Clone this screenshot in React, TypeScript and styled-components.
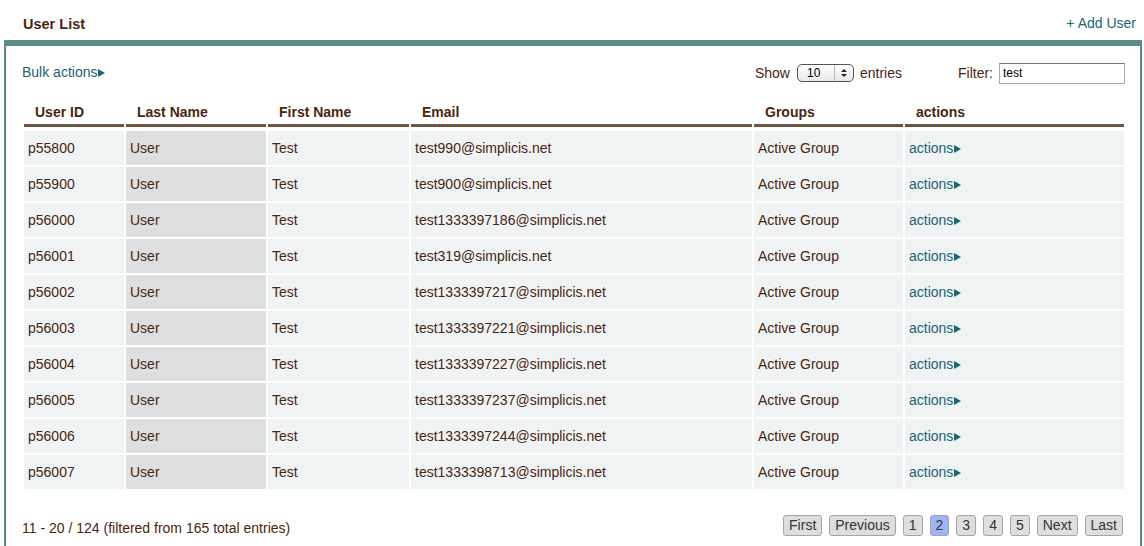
import React from "react";
import styled, { createGlobalStyle } from "styled-components";

const Global = createGlobalStyle`
  html, body { margin: 0; padding: 0; background: #fff; }
  body { font-family: "Liberation Sans", Arial, Helvetica, sans-serif; color: #4a2511; }
`;

const Page = styled.div`
  width: 1144px;
  height: 546px;
  overflow: hidden;
`;

const TitleBar = styled.div`
  height: 40px;
  display: flex;
  align-items: center;
  justify-content: space-between;
  padding: 0 8px 0 23px;
  box-sizing: border-box;
`;

const Title = styled.h1`
  margin: 7px 0 0;
  font-size: 14.5px;
  font-weight: bold;
  color: #4a2511;
`;

const Link = styled.a`
  color: #1b6572;
  text-decoration: none;
  font-size: 14px;
  cursor: pointer;
`;

const AddLink = styled(Link)`
  margin-top: 5px;
`;

const BulkLink = styled(Link)`
  margin-bottom: 3px;
`;

const Panel = styled.div`
  margin-left: 4px;
  width: 1138px;
  box-sizing: border-box;
  border-top: 6px solid #5e8a8c;
  border-left: 2px solid #5e8a8c;
  border-right: 2px solid #5e8a8c;
  padding: 15px 15px 0 16px;
  height: 506px;
`;

const Toolbar = styled.div`
  display: flex;
  align-items: center;
  height: 24px;
  padding-right: 0;
`;

const Triangle = styled.span`
  display: inline-block;
  width: 0;
  height: 0;
  border-top: 4px solid transparent;
  border-bottom: 4px solid transparent;
  border-left: 7px solid #1b6572;
  margin-left: 1px;
  vertical-align: 0px;
`;

const Spacer = styled.div`
  flex: 1;
`;

const Label = styled.span`
  font-size: 14px;
  color: #4a2511;
`;

const SelectBox = styled.div`
  display: inline-flex;
  align-items: center;
  width: 57px;
  height: 18px;
  box-sizing: border-box;
  margin: 0 6px 0 7px;
  border: 1px solid #555;
  border-radius: 5px;
  background: linear-gradient(#fff, #e8e8e8);
  font-size: 12px;
  color: #000;
`;

const SelectValue = styled.span`
  padding-left: 9px;
  flex: 1;
`;

const SelectArrows = styled.span`
  width: 18px;
  height: 100%;
  border-left: 1px solid #bbb;
  display: flex;
  flex-direction: column;
  align-items: center;
  justify-content: center;
  gap: 2px;
`;

const Arrow = styled.span<{ $up?: boolean }>`
  width: 0;
  height: 0;
  border-left: 3px solid transparent;
  border-right: 3px solid transparent;
  ${(p) => (p.$up ? "border-bottom: 3px solid #222;" : "border-top: 3px solid #222;")}
`;

const FilterLabel = styled(Label)`
  margin-left: 56px;
  margin-right: 6px;
`;

const FilterInput = styled.input`
  width: 126px;
  height: 21px;
  box-sizing: border-box;
  border: 1px solid #aaa;
  border-top-color: #777;
  font-family: "Liberation Sans", Arial, sans-serif;
  font-size: 12px;
  padding: 2px 3px;
  color: #000;
  outline: none;
`;

const Table = styled.table`
  margin-top: 12px;
  width: 1104px;
  border-collapse: separate;
  border-spacing: 2px 2px;
  table-layout: fixed;
`;

const Th = styled.th<{ $w: number }>`
  width: ${(p) => p.$w}px;
  box-sizing: border-box;
  text-align: left;
  font-size: 14px;
  font-weight: bold;
  color: #4a2511;
  padding: 5px 0 9px 11px;
  background: linear-gradient(#6e5444, #6e5444) left bottom 2px / 100% 3px no-repeat;
`;

const Td = styled.td<{ $sorted?: boolean }>`
  height: 34px;
  padding: 0 0 0 4px;
  box-sizing: border-box;
  font-size: 14px;
  color: #4a2511;
  background: ${(p) => (p.$sorted ? "#dddfe0" : "#eff3f4")};
  white-space: nowrap;
`;

const Footer = styled.div`
  display: flex;
  align-items: center;
  justify-content: space-between;
  margin-top: 23px;
  padding-right: 2px;
`;

const Info = styled.span`
  font-size: 14px;
  color: #4a2511;
  margin-top: 6px;
`;

const Pager = styled.div`
  display: flex;
  gap: 7px;
`;

const PageButton = styled.span<{ $active?: boolean }>`
  display: inline-flex;
  align-items: center;
  justify-content: center;
  height: 21px;
  padding: 0 5px;
  box-sizing: border-box;
  border: 1px solid #a5a5a5;
  border-radius: 3px;
  background: ${(p) => (p.$active ? "#9fb4f7" : "#dedede")};
  color: #333;
  font-size: 14px;
`;

const rows = [
  ["p55800", "test990@simplicis.net"],
  ["p55900", "test900@simplicis.net"],
  ["p56000", "test1333397186@simplicis.net"],
  ["p56001", "test319@simplicis.net"],
  ["p56002", "test1333397217@simplicis.net"],
  ["p56003", "test1333397221@simplicis.net"],
  ["p56004", "test1333397227@simplicis.net"],
  ["p56005", "test1333397237@simplicis.net"],
  ["p56006", "test1333397244@simplicis.net"],
  ["p56007", "test1333398713@simplicis.net"],
];

export default function App() {
  return (
    <Page>
      <Global />
      <TitleBar>
        <Title>User List</Title>
        <AddLink>+ Add User</AddLink>
      </TitleBar>
      <Panel>
        <Toolbar>
          <BulkLink>
            Bulk actions<Triangle />
          </BulkLink>
          <Spacer />
          <Label>Show</Label>
          <SelectBox>
            <SelectValue>10</SelectValue>
            <SelectArrows>
              <Arrow $up />
              <Arrow />
            </SelectArrows>
          </SelectBox>
          <Label>entries</Label>
          <FilterLabel>Filter:</FilterLabel>
          <FilterInput defaultValue="test" />
        </Toolbar>
        <Table>
          <thead>
            <tr>
              <Th $w={100}>User ID</Th>
              <Th $w={140}>Last Name</Th>
              <Th $w={141}>First Name</Th>
              <Th $w={341}>Email</Th>
              <Th $w={149}>Groups</Th>
              <Th $w={219}>actions</Th>
            </tr>
          </thead>
          <tbody>
            {rows.map(([id, email]) => (
              <tr key={id}>
                <Td>{id}</Td>
                <Td $sorted>User</Td>
                <Td>Test</Td>
                <Td>{email}</Td>
                <Td>Active Group</Td>
                <Td>
                  <Link>
                    actions<Triangle />
                  </Link>
                </Td>
              </tr>
            ))}
          </tbody>
        </Table>
        <Footer>
          <Info>11 - 20 / 124 (filtered from 165 total entries)</Info>
          <Pager>
            <PageButton>First</PageButton>
            <PageButton>Previous</PageButton>
            <PageButton>1</PageButton>
            <PageButton $active>2</PageButton>
            <PageButton>3</PageButton>
            <PageButton>4</PageButton>
            <PageButton>5</PageButton>
            <PageButton>Next</PageButton>
            <PageButton>Last</PageButton>
          </Pager>
        </Footer>
      </Panel>
    </Page>
  );
}
